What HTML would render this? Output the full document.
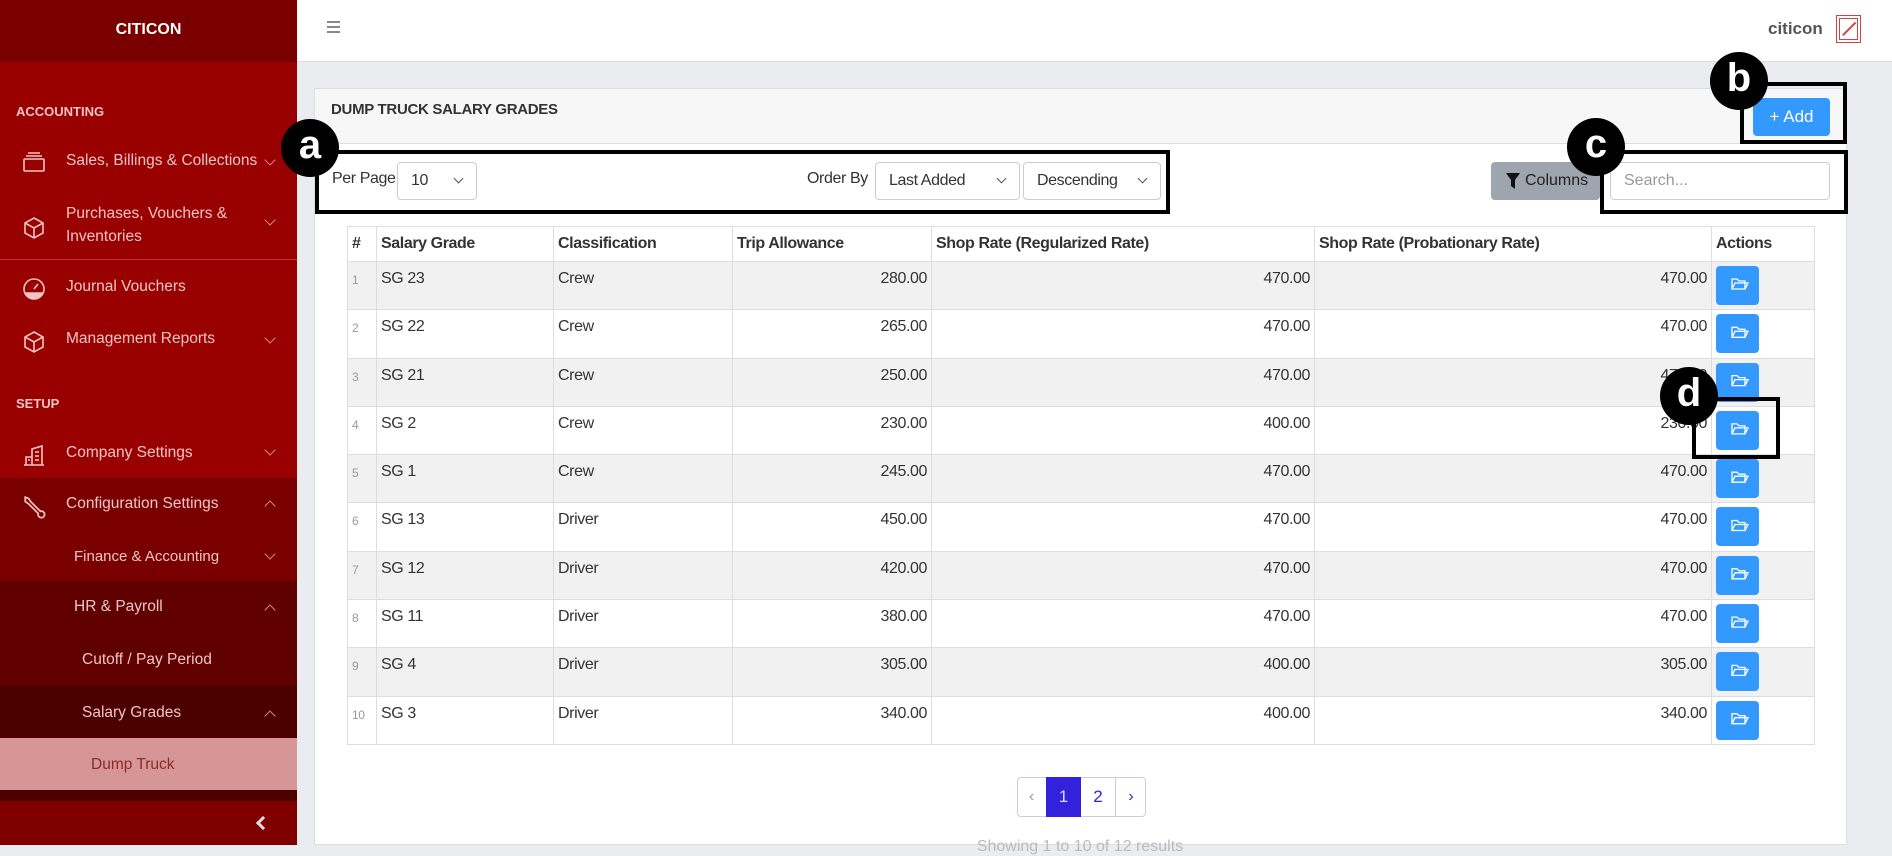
<!DOCTYPE html>
<html><head><meta charset="utf-8"><style>
*{box-sizing:border-box;margin:0;padding:0}
body{width:1892px;height:845px;overflow:hidden;font-family:"Liberation Sans",sans-serif;background:#ebecef;position:relative}
.a{position:absolute}
#sb{left:0;top:0;width:297px;height:845px;background:#990000;color:#f0c4c4;font-size:15.5px}
.si{position:absolute;left:66px;white-space:nowrap}
.chev{position:absolute;left:266px;width:8px;height:8px;border-right:1px solid #d88;border-bottom:1px solid #d88;transform:rotate(45deg)}
.chevu{transform:rotate(225deg)}
.ic{position:absolute;left:22px;stroke:#f0c4c4;fill:none;stroke-width:1.6}
.cond{letter-spacing:-0.4px}
table{border-collapse:collapse;position:absolute;left:347px;top:226px;width:1468px;font-size:16px;color:#333}
td,th{border:1px solid #dcdde2;height:48.3px;padding:8px 4px 0;text-align:left;font-weight:normal;letter-spacing:-0.4px;vertical-align:top}
td:last-child{padding-top:4px}
th{height:35px;font-weight:bold;color:#333;vertical-align:middle;padding-top:0}
tbody tr:nth-child(odd){background:#f1f1f1}
td.n{text-align:right}
td.i{color:#999;font-size:12px;padding-top:11px}
.btn{display:block;width:43px;height:39px;background:#3399ff;border-radius:4px;position:relative}
.sel{position:absolute;top:162px;height:38px;border:1px solid #ccc;border-radius:4px;background:#fff;font-size:16px;color:#333;line-height:36px;padding-left:13px;letter-spacing:-0.4px}
.sel i{position:absolute;right:14px;top:12px;width:7px;height:7px;border-right:1.3px solid #555;border-bottom:1.3px solid #555;transform:rotate(45deg)}
.box{position:absolute;border:4.5px solid #000}
.circ{position:absolute;width:58px;height:58px;border-radius:50%;background:#000;color:#fff;font-weight:bold;font-size:40px;text-align:center;line-height:52px}
</style></head><body>
<div id="sb" class="a">
 <div class="a" style="left:0;top:0;width:297px;height:62px;background:#7a0000;color:#fff;font-weight:bold;font-size:16px;text-align:center;line-height:60px">CITICON</div>
 <div class="a" style="left:16px;top:104px;font-weight:bold;font-size:13px">ACCOUNTING</div>
 <svg class="ic" style="top:150px" width="24" height="24" viewBox="0 0 24 24"><rect x="2" y="9" width="20" height="12" rx="1"/><path d="M4 6h16M6 3h12"/></svg>
 <div class="si" style="top:152px">Sales, Billings &amp; Collections</div><div class="chev" style="top:156px"></div>
 <svg class="ic" style="top:216px" width="24" height="24" viewBox="0 0 24 24"><path d="M12 2l9 5v10l-9 5-9-5V7z M3 7l9 5 9-5 M12 12v10"/></svg>
 <div class="si" style="top:202px;line-height:23px">Purchases, Vouchers &amp;<br>Inventories</div><div class="chev" style="top:216px"></div>
 <div class="a" style="left:0;top:259px;width:297px;height:1px;background:#b33"></div>
 <svg class="ic" style="top:277px" width="24" height="24" viewBox="0 0 24 24"><circle cx="12" cy="12" r="10"/><path d="M3 16h18M12 12l4-5" /><path d="M4 17a10 10 0 0 0 16 0z" fill="#f0c4c4"/></svg>
 <div class="si" style="top:278px">Journal Vouchers</div>
 <svg class="ic" style="top:330px" width="24" height="24" viewBox="0 0 24 24"><path d="M12 2l9 5v10l-9 5-9-5V7z M3 7l9 5 9-5 M12 12v10"/></svg>
 <div class="si" style="top:330px">Management Reports</div><div class="chev" style="top:334px"></div>
 <div class="a" style="left:16px;top:396px;font-weight:bold;font-size:13px">SETUP</div>
 <svg class="ic" style="top:443px" width="24" height="24" viewBox="0 0 24 24"><path d="M2 22h20M4 22v-8h6v8M10 22V6l10-3v19"/><path d="M13 9h4M13 13h4M13 17h4M6 17h2"/></svg>
 <div class="si" style="top:444px">Company Settings</div><div class="chev" style="top:446px"></div>
 <div class="a" style="left:0;top:478px;width:297px;height:103px;background:#7a0000"></div>
 <svg class="ic" style="top:494px" width="26" height="26" viewBox="0 0 24 24"><path d="M3 3l3 1 2 3 9 9a3 3 0 1 1-2 2l-9-9-3-2z"/></svg>
 <div class="si" style="top:495px">Configuration Settings</div><div class="chev chevu" style="top:502px"></div>
 <div class="si" style="left:74px;top:548px;font-size:15px">Finance &amp; Accounting</div><div class="chev" style="top:550px"></div>
 <div class="a" style="left:0;top:581px;width:297px;height:104px;background:#600000"></div>
 <div class="si" style="left:74px;top:598px">HR &amp; Payroll</div><div class="chev chevu" style="top:606px"></div>
 <div class="si" style="left:82px;top:651px">Cutoff / Pay Period</div>
 <div class="a" style="left:0;top:685px;width:297px;height:116px;background:#4d0000"></div>
 <div class="si" style="left:82px;top:704px">Salary Grades</div><div class="chev chevu" style="top:712px"></div>
 <div class="a" style="left:0;top:738px;width:297px;height:52px;background:#d69696"></div>
 <div class="si" style="left:91px;top:756px;color:#8a2a2a">Dump Truck</div>
 <div class="a" style="left:0;top:801px;width:297px;height:44px;background:#800000"></div>
 <div class="a" style="left:258px;top:818px;width:10px;height:10px;border-left:3px solid #ddd;border-bottom:3px solid #ddd;transform:rotate(45deg)"></div>
</div>
<div class="a" style="left:297px;top:0;width:1595px;height:62px;background:#fff;border-bottom:1px solid #dcdde2"></div>
<div class="a" style="left:327px;top:21px;width:13px;height:1.5px;background:#888;box-shadow:0 5px 0 #888,0 10px 0 #888"></div>
<div class="a" style="left:1768px;top:19px;font-weight:bold;font-size:17px;color:#555">citicon</div>
<div class="a" style="left:1836px;top:15px;width:25px;height:28px;border:1.5px solid #c44;"><div style="position:absolute;left:2px;top:2px;right:2px;bottom:2px;border:1px solid #c44"></div><div style="position:absolute;left:3px;top:12px;width:18px;height:1.5px;background:#c44;transform:rotate(-45deg)"></div></div>
<div class="a" style="left:314px;top:88px;width:1533px;height:757px;background:#fff;border:1px solid #dcdde2"></div>
<div class="a" style="left:315px;top:89px;width:1531px;height:55px;background:#f7f7f7;border-bottom:1px solid #dcdde2"></div>
<div class="a" style="left:331px;top:101px;font-weight:bold;font-size:15px;color:#333;letter-spacing:-0.3px">DUMP TRUCK SALARY GRADES</div>
<div class="a" style="left:1753px;top:98px;width:77px;height:38px;background:#3399ff;border-radius:4px;color:#fff;font-size:17px;line-height:38px;text-align:center">+ Add</div>
<div class="a cond" style="left:332px;top:170px;font-size:16px;color:#333">Per Page</div>
<div class="sel" style="left:397px;width:80px">10<i></i></div>
<div class="a cond" style="left:807px;top:170px;font-size:16px;color:#333">Order By</div>
<div class="sel" style="left:875px;width:145px">Last Added<i></i></div>
<div class="sel" style="left:1023px;width:138px">Descending<i></i></div>
<div class="a" style="left:1491px;top:162px;width:109px;height:38px;background:#9ea5ae;border-radius:4px;color:#222;font-size:16px;line-height:38px;padding-left:34px">Columns</div>
<svg class="a" style="left:1506px;top:173px" width="14" height="16" viewBox="0 0 14 16"><path d="M0 0h14L9 7v9L5 13V7z" fill="#111"/></svg>
<div class="a" style="left:1610px;top:162px;width:220px;height:38px;border:1px solid #ccc;border-radius:4px;color:#999;font-size:16px;line-height:36px;padding-left:13px">Search...</div>
<table>
<thead><tr><th style="width:29px">#</th><th style="width:177px">Salary Grade</th><th style="width:179px">Classification</th><th style="width:199px">Trip Allowance</th><th style="width:383px">Shop Rate (Regularized Rate)</th><th style="width:397px">Shop Rate (Probationary Rate)</th><th>Actions</th></tr></thead>
<tbody>
<tr><td class="i">1</td><td>SG 23</td><td>Crew</td><td class="n">280.00</td><td class="n">470.00</td><td class="n">470.00</td><td><span class="btn"></span></td></tr>
<tr><td class="i">2</td><td>SG 22</td><td>Crew</td><td class="n">265.00</td><td class="n">470.00</td><td class="n">470.00</td><td><span class="btn"></span></td></tr>
<tr><td class="i">3</td><td>SG 21</td><td>Crew</td><td class="n">250.00</td><td class="n">470.00</td><td class="n">470.00</td><td><span class="btn"></span></td></tr>
<tr><td class="i">4</td><td>SG 2</td><td>Crew</td><td class="n">230.00</td><td class="n">400.00</td><td class="n">230.00</td><td><span class="btn"></span></td></tr>
<tr><td class="i">5</td><td>SG 1</td><td>Crew</td><td class="n">245.00</td><td class="n">470.00</td><td class="n">470.00</td><td><span class="btn"></span></td></tr>
<tr><td class="i">6</td><td>SG 13</td><td>Driver</td><td class="n">450.00</td><td class="n">470.00</td><td class="n">470.00</td><td><span class="btn"></span></td></tr>
<tr><td class="i">7</td><td>SG 12</td><td>Driver</td><td class="n">420.00</td><td class="n">470.00</td><td class="n">470.00</td><td><span class="btn"></span></td></tr>
<tr><td class="i">8</td><td>SG 11</td><td>Driver</td><td class="n">380.00</td><td class="n">470.00</td><td class="n">470.00</td><td><span class="btn"></span></td></tr>
<tr><td class="i">9</td><td>SG 4</td><td>Driver</td><td class="n">305.00</td><td class="n">400.00</td><td class="n">305.00</td><td><span class="btn"></span></td></tr>
<tr><td class="i">10</td><td>SG 3</td><td>Driver</td><td class="n">340.00</td><td class="n">400.00</td><td class="n">340.00</td><td><span class="btn"></span></td></tr>
</tbody></table>
<svg class="a" style="left:0;top:0" width="1892" height="845">
<g fill="none" stroke="#fff" stroke-width="1.3">
<path id="f" d="M1732 279h5l2 2h6v8h-13z M1732 289l3-6h13l-3 6"/>
</g>
<g fill="none" stroke="#fff" stroke-width="1.3">
<use href="#f" y="48.3"/><use href="#f" y="96.6"/><use href="#f" y="144.9"/><use href="#f" y="193.2"/><use href="#f" y="241.5"/><use href="#f" y="289.8"/><use href="#f" y="338.1"/><use href="#f" y="386.4"/><use href="#f" y="434.7"/>
</g>
</svg>
<div class="a" style="left:1017px;top:777px;width:129px;height:40px;border:1px solid #ccd;border-radius:4px;background:#fff"></div>
<div class="a" style="left:1017px;top:777px;width:29px;height:40px;line-height:40px;text-align:center;color:#999">‹</div>
<div class="a" style="left:1046px;top:777px;width:35px;height:40px;line-height:40px;text-align:center;background:#3322dd;color:#ddd;font-size:17px">1</div>
<div class="a" style="left:1081px;top:777px;width:35px;height:40px;line-height:40px;text-align:center;color:#3322dd;font-size:17px;border-right:1px solid #ccd">2</div>
<div class="a" style="left:1116px;top:777px;width:30px;height:40px;line-height:40px;text-align:center;color:#3322dd">›</div>
<div class="a" style="left:974px;top:838px;width:212px;text-align:center;color:#bbb;font-size:16px">Showing 1 to 10 of 12 results</div>
<div class="box" style="left:315px;top:150px;width:855px;height:64px"></div>
<div class="circ" style="left:281px;top:119px">a</div>
<div class="box" style="left:1740px;top:82px;width:107px;height:62px"></div>
<div class="circ" style="left:1710px;top:52px">b</div>
<div class="box" style="left:1600px;top:150px;width:248px;height:64px"></div>
<div class="circ" style="left:1567px;top:118px">c</div>
<div class="box" style="left:1692px;top:397px;width:88px;height:62px"></div>
<div class="circ" style="left:1660px;top:367px">d</div>
</body></html>
